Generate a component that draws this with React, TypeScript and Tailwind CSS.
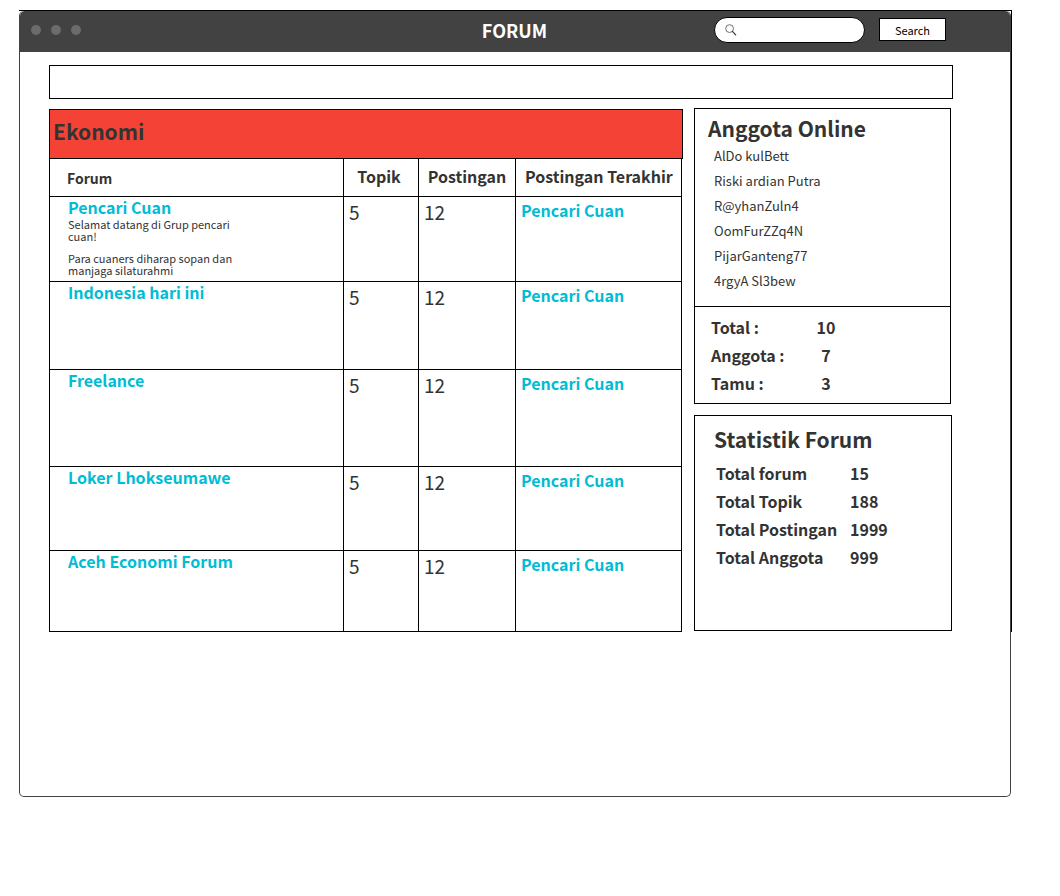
const members = [
  'AlDo kulBett',
  'Riski ardian Putra',
  'R@yhanZuln4',
  'OomFurZZq4N',
  'PijarGanteng77',
  '4rgyA Sl3bew',
]

const onlineTotals = [
  { label: 'Total :', value: 10 },
  { label: 'Anggota :', value: 7 },
  { label: 'Tamu :', value: 3 },
]

const statistics = [
  { label: 'Total forum', value: 15 },
  { label: 'Total Topik', value: 188 },
  { label: 'Total Postingan', value: 1999 },
  { label: 'Total Anggota', value: 999 },
]

const forums = [
  {
    name: 'Pencari Cuan',
    description: ['Selamat datang di Grup pencari cuan!', 'Para cuaners diharap sopan dan manjaga silaturahmi'],
    height: 'h-[85px]',
  },
  { name: 'Indonesia hari ini', description: [], height: 'h-[88px]' },
  { name: 'Freelance', description: [], height: 'h-[97px]' },
  { name: 'Loker Lhokseumawe', description: [], height: 'h-[84px]' },
  { name: 'Aceh Economi Forum', description: [], height: 'h-[81px]' },
]

function TitleBar() {
  return (
    <header className="grid h-[41px] grid-cols-[1fr_auto_1fr] items-center rounded-t-[5px] bg-[#424242] pr-16 pb-1 pl-[11px]">
      <div className="flex gap-2.5" aria-hidden="true">
        <span className="size-2.5 rounded-full bg-[#6b6b6b]" />
        <span className="size-2.5 rounded-full bg-[#6b6b6b]" />
        <span className="size-2.5 rounded-full bg-[#6b6b6b]" />
      </div>
      <h1 className="pl-[52px] text-[18px] leading-6 font-bold text-white">FORUM</h1>
      <form className="flex items-center justify-end gap-3.5" onSubmit={(e) => e.preventDefault()}>
        <label className="flex h-[26px] w-[151px] items-center gap-1.5 rounded-full border border-black bg-white pr-3 pl-2.5">
          <svg viewBox="0 0 12 12" className="size-3 shrink-0" fill="none" stroke="#333" aria-hidden="true">
            <circle cx="4.6" cy="4.6" r="3.9" strokeWidth="0.7" />
            <path d="M7.4 7.4 10.7 10.9" strokeWidth="1.2" strokeLinecap="round" />
          </svg>
          <input type="search" aria-label="Cari forum" className="w-full min-w-0 bg-transparent text-[12px] outline-none" />
        </label>
        <button type="submit" className="h-[23px] w-[67px] border border-black bg-white text-[11px] leading-5 text-black">
          Search
        </button>
      </form>
    </header>
  )
}

function ForumTable() {
  return (
    <section className="min-w-0 flex-1 pt-px">
      <h2 className="h-[50px] border border-black bg-[#f44336] pl-[3px] text-[21px] leading-[42px] font-bold">Ekonomi</h2>
      <div className="pr-px">
        <table className="w-full table-fixed border-separate border-spacing-0 border-l border-black text-left">
          <colgroup>
            <col />
            <col className="w-[75px]" />
            <col className="w-[97px]" />
            <col className="w-[166px]" />
          </colgroup>
          <thead>
            <tr className="h-[38px] text-[16px] leading-6">
              <th className="border-r border-b border-black p-0 pl-[17px] text-[14px]">Forum</th>
              <th className="border-r border-b border-black p-0 pr-1 pb-1 text-center">Topik</th>
              <th className="border-r border-b border-black p-0 pb-1 text-center">Postingan</th>
              <th className="border-r border-b border-black p-0 pb-1 pl-[9px]">Postingan Terakhir</th>
            </tr>
          </thead>
          <tbody>
            {forums.map((forum) => (
              <tr key={forum.name} className={`${forum.height} align-top`}>
                <td className="border-r border-b border-black p-0 pl-[18px]">
                  <a href="#" className="block text-[16px] leading-[21px] font-bold text-[#00bcd4]">
                    {forum.name}
                  </a>
                  {forum.description.length > 0 && (
                    <div className="flex w-[170px] flex-col gap-2.5 text-[11px] leading-3">
                      {forum.description.map((line) => (
                        <p key={line}>{line}</p>
                      ))}
                    </div>
                  )}
                </td>
                <td className="border-r border-b border-black p-0 pl-[5px] text-[19px] leading-[30px]">5</td>
                <td className="border-r border-b border-black p-0 pl-[5px] text-[19px] leading-[30px]">12</td>
                <td className="border-r border-b border-black p-0 pl-[5px]">
                  <a href="#" className="block text-[16px] leading-[26px] font-bold text-[#00bcd4]">
                    Pencari Cuan
                  </a>
                </td>
              </tr>
            ))}
          </tbody>
        </table>
      </div>
    </section>
  )
}

function Sidebar() {
  return (
    <aside className="flex w-[258px] shrink-0 flex-col gap-[11px]">
      <section className="mr-px border border-black">
        <div className="h-[197px] pl-[13px]">
          <h2 className="pt-[5px] text-[21px] leading-7 font-bold">Anggota Online</h2>
          <ul className="pt-px pl-1.5 text-[13px] leading-[25px]">
            {members.map((name) => (
              <li key={name}>{name}</li>
            ))}
          </ul>
        </div>
        <dl className="h-[97px] border-t border-black pt-1.5 pl-4 text-[16px] leading-7 font-bold">
          {onlineTotals.map((row) => (
            <div key={row.label} className="flex">
              <dt className="w-[95px]">{row.label}</dt>
              <dd className="w-10 text-center">{row.value}</dd>
            </div>
          ))}
        </dl>
      </section>
      <section className="h-[216px] border border-black pl-[19px]">
        <h2 className="pt-[7px] text-[21px] leading-8 font-bold">Statistik Forum</h2>
        <dl className="pt-1 pl-0.5 text-[16px] leading-7 font-bold">
          {statistics.map((row) => (
            <div key={row.label} className="flex">
              <dt className="w-[134px]">{row.label}</dt>
              <dd>{row.value}</dd>
            </div>
          ))}
        </dl>
      </section>
    </aside>
  )
}

export default function App() {
  return (
    <div className="min-h-screen bg-white pt-2.5 pr-12 pl-[19px] font-['Noto_Sans_CJK_SC','Noto_Sans',sans-serif] text-[#333]">
      <div className="relative pt-px pr-px">
        <div className="pointer-events-none absolute inset-x-0 top-0 h-[622px] border-t border-r border-black" />
        <div className="min-h-[786px] rounded-[5px] border border-t-0 border-[#424242]">
          <TitleBar />
          <main className="pt-[13px] pr-[57px] pl-[29px]">
            <div className="h-[34px] border border-black" />
            <div className="flex items-start gap-[11px] pt-[9px] pr-px">
              <ForumTable />
              <Sidebar />
            </div>
          </main>
        </div>
      </div>
    </div>
  )
}
